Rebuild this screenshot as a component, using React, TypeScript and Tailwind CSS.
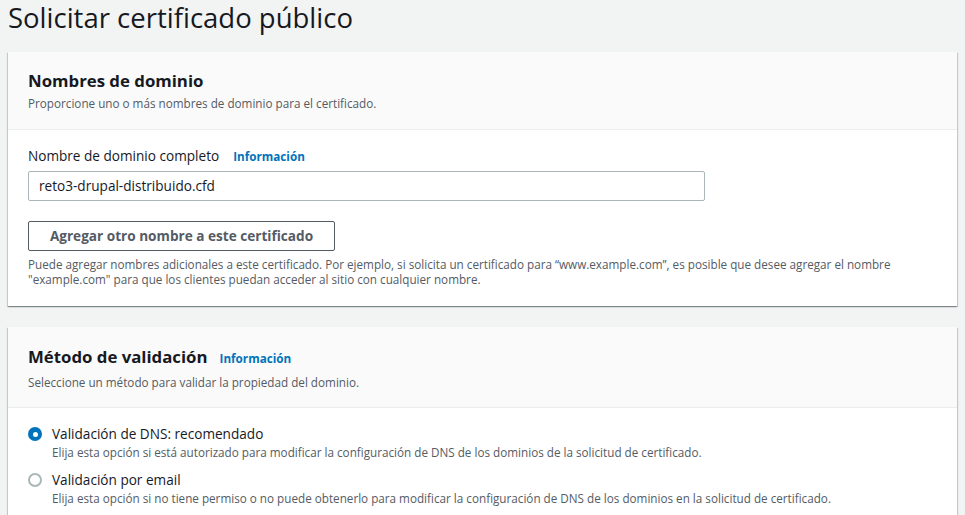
import React from 'react';

const font = { fontFamily: '"Open Sans", "Noto Sans", sans-serif' };

const InfoLink: React.FC<{ className?: string }> = ({ className = '' }) => (
  <a className={`text-[11.7px] font-bold text-[#0073bb] ${className}`}>Información</a>
);

const Radio: React.FC<{ checked?: boolean }> = ({ checked }) =>
  checked ? (
    <span className="mt-[3px] flex h-[14px] w-[14px] shrink-0 items-center justify-center rounded-full bg-[#0073bb]">
      <span className="h-[5px] w-[5px] rounded-full bg-white" />
    </span>
  ) : (
    <span className="mt-[3px] h-[14px] w-[14px] shrink-0 rounded-full border-2 border-[#aab7b8] bg-white" />
  );

export default function App() {
  const cardShadow =
    'shadow-[0_1px_1px_0_rgba(0,28,36,0.3),1px_1px_1px_0_rgba(0,28,36,0.15),-1px_1px_1px_0_rgba(0,28,36,0.15)]';

  return (
    <div className="min-h-[515px] w-[965px] overflow-hidden bg-[#f2f3f3] text-[#16191f]" style={font}>
      <h1 className="px-[8px] pt-[1px] text-[27.5px] leading-[34px] font-normal">Solicitar certificado público</h1>

      {/* Nombres de dominio */}
      <section className={`mx-[8px] mt-[17px] w-[949px] bg-white ${cardShadow}`}>
        <div className="border-b border-[#eaeded] bg-[#fafafa] px-[20px] pt-[17px] pb-[18px]">
          <h2 className="text-[16.8px] leading-[24px] font-bold">Nombres de dominio</h2>
          <p className="mt-[2px] text-[11.7px] leading-[16px] text-[#545b64]">
            Proporcione uno o más nombres de dominio para el certificado.
          </p>
        </div>
        <div className="px-[20px] pt-[15px] pb-[19px]">
          <div className="flex items-baseline gap-[14px]">
            <span className="text-[13.6px] leading-[22px]">Nombre de dominio completo</span>
            <InfoLink />
          </div>
          <div className="mt-[4px] flex h-[30px] w-[677px] items-center rounded-[2px] border border-[#aab7b8] bg-white px-[10px] text-[13.6px]">
            reto3-drupal-distribuido.cfd
          </div>
          <button className="mt-[20px] flex h-[30px] w-[307px] items-center justify-center rounded-[2px] border border-[#545b64] bg-white text-[13.6px] font-bold text-[#545b64]">
            Agregar otro nombre a este certificado
          </button>
          <p className="mt-[6px] text-[11.7px] leading-[15px] text-[#545b64]">
            Puede agregar nombres adicionales a este certificado. Por ejemplo, si solicita un certificado para
            “www.example.com”, es posible que desee agregar el nombre
            <br />
            "example.com" para que los clientes puedan acceder al sitio con cualquier nombre.
          </p>
        </div>
      </section>

      {/* Método de validación */}
      <section className={`mx-[8px] mt-[21px] w-[949px] bg-white ${cardShadow}`}>
        <div className="border-b border-[#eaeded] bg-[#fafafa] px-[20px] pt-[18px] pb-[17px]">
          <div className="flex items-baseline gap-[12px]">
            <h2 className="text-[16.8px] leading-[24px] font-bold">Método de validación</h2>
            <InfoLink />
          </div>
          <p className="mt-[5px] text-[11.7px] leading-[16px] text-[#545b64]">
            Seleccione un método para validar la propiedad del dominio.
          </p>
        </div>
        <div className="flex flex-col gap-[10px] px-[20px] pt-[16px] pb-[16px]">
          <label className="flex gap-[10px]">
            <Radio checked />
            <span className="flex flex-col">
              <span className="text-[13.6px] leading-[20px]">Validación de DNS: recomendado</span>
              <span className="text-[11.7px] leading-[16px] text-[#545b64]">
                Elija esta opción si está autorizado para modificar la configuración de DNS de los dominios de la
                solicitud de certificado.
              </span>
            </span>
          </label>
          <label className="flex gap-[10px]">
            <Radio />
            <span className="flex flex-col">
              <span className="text-[13.6px] leading-[20px]">Validación por email</span>
              <span className="text-[11.7px] leading-[16px] text-[#545b64]">
                Elija esta opción si no tiene permiso o no puede obtenerlo para modificar la configuración de DNS de
                los dominios en la solicitud de certificado.
              </span>
            </span>
          </label>
        </div>
      </section>
    </div>
  );
}
